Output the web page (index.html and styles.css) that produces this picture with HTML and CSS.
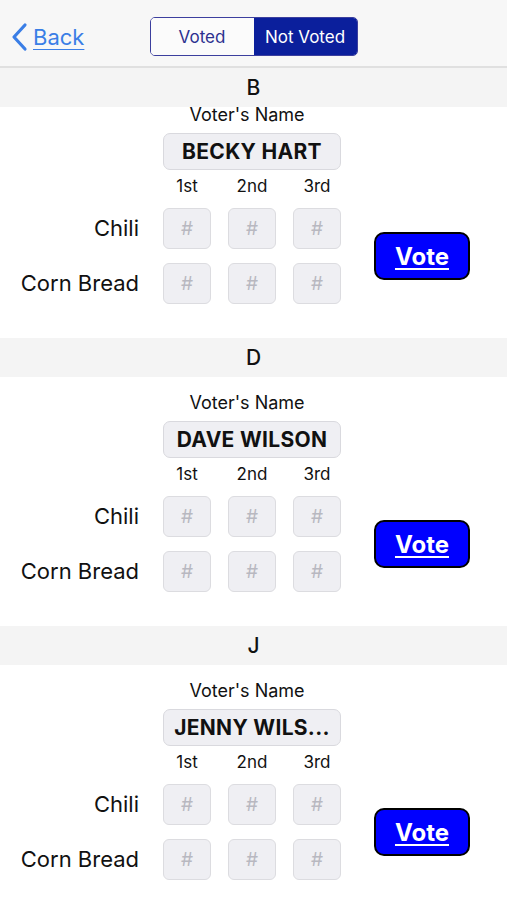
FILE: index.html
```html
<!DOCTYPE html>
<html>

<head>
	<title>Voting</title>
	<link rel="stylesheet" href="styles.css">
</head>

<body>
	<header class="navbar">
		<a class="back" href="#">
			<svg class="chevron" width="17" height="30" viewBox="0 0 17 30">
				<polyline points="14,3 3,15 14,27" fill="none" stroke="#3a7ee6" stroke-width="3.2" stroke-linecap="round" stroke-linejoin="round" />
			</svg>
			<span>Back</span>
		</a>
		<div class="segmented">
			<span class="seg">Voted</span>
			<span class="seg active">Not Voted</span>
		</div>
		<div></div>
	</header>

	<section class="group">
		<h2 class="letter">B</h2>
		<div class="entry first">
			<div class="voter-label">Voter's Name</div>
			<div class="namebox">BECKY HART</div>
			<div class="ordinals"><span>1st</span><span>2nd</span><span>3rd</span></div>
			<div class="dish">Chili</div>
			<div class="ranks"><span class="rank">#</span><span class="rank">#</span><span class="rank">#</span></div>
			<button class="vote">Vote</button>
			<div class="dish dish-second">Corn Bread</div>
			<div class="ranks ranks-second"><span class="rank">#</span><span class="rank">#</span><span class="rank">#</span></div>
		</div>
	</section>

	<section class="group">
		<h2 class="letter">D</h2>
		<div class="entry">
			<div class="voter-label">Voter's Name</div>
			<div class="namebox">DAVE WILSON</div>
			<div class="ordinals"><span>1st</span><span>2nd</span><span>3rd</span></div>
			<div class="dish">Chili</div>
			<div class="ranks"><span class="rank">#</span><span class="rank">#</span><span class="rank">#</span></div>
			<button class="vote">Vote</button>
			<div class="dish dish-second">Corn Bread</div>
			<div class="ranks ranks-second"><span class="rank">#</span><span class="rank">#</span><span class="rank">#</span></div>
		</div>
	</section>

	<section class="group">
		<h2 class="letter">J</h2>
		<div class="entry">
			<div class="voter-label">Voter's Name</div>
			<div class="namebox">JENNY WILS...</div>
			<div class="ordinals"><span>1st</span><span>2nd</span><span>3rd</span></div>
			<div class="dish">Chili</div>
			<div class="ranks"><span class="rank">#</span><span class="rank">#</span><span class="rank">#</span></div>
			<button class="vote">Vote</button>
			<div class="dish dish-second">Corn Bread</div>
			<div class="ranks ranks-second"><span class="rank">#</span><span class="rank">#</span><span class="rank">#</span></div>
		</div>
	</section>
</body>

</html>
```

FILE: styles.css
```css
* {
	margin: 0px;
	padding: 0px;
	box-sizing: border-box;
}

body {
	background: #ffffff;
	font-family: Inter, "Noto Sans", sans-serif;
	color: #111111;
	overflow: hidden;
}

.navbar {
	height: 68px;
	background: #f7f7f7;
	border-bottom: 2px solid #e0e0e0;
	display: grid;
	grid-template-columns: 1fr auto 1fr;
	align-items: start;
	padding-top: 17px;
}

.back {
	display: flex;
	align-items: center;
	height: 39px;
	padding-left: 11px;
	color: #3a7ee6;
	font-size: 22px;
	text-decoration: none;
}

.back span {
	margin-left: 5px;
	text-decoration: underline;
	text-decoration-thickness: 1px;
	text-underline-offset: 4px;
}

.chevron {
	display: block;
}

.segmented {
	display: flex;
	height: 39px;
	border: 1px solid #3c3f9e;
	border-radius: 5px;
	overflow: hidden;
}

.seg {
	width: 103px;
	display: flex;
	align-items: center;
	justify-content: center;
	font-size: 17px;
	color: #2c3190;
	background: #fbfbfb;
}

.seg.active {
	background: #0b1f9c;
	color: #ffffff;
}

.letter {
	height: 39px;
	line-height: 39px;
	background: #f4f4f4;
	text-align: center;
	font-size: 21px;
	font-weight: 500;
}

.entry {
	display: grid;
	grid-template-columns: 140px 178px 106px;
	column-gap: 23px;
	padding-top: 16px;
	padding-bottom: 34px;
}

.entry.first {
	padding-top: 0px;
}

.entry.first .voter-label {
	margin-top: -2px;
}

.voter-label {
	grid-column: 2;
	line-height: 20px;
	font-size: 18px;
	text-align: center;
	padding-right: 10px;
}

.namebox {
	grid-column: 2;
	margin-top: 8px;
	height: 37px;
	background: #efeff3;
	border: 1px solid #d9d9de;
	border-radius: 7px;
	display: flex;
	align-items: center;
	justify-content: center;
	font-size: 21px;
	font-weight: 700;
	letter-spacing: 0.3px;
}

.ordinals {
	grid-column: 2;
	margin-top: 6px;
	display: flex;
	gap: 17px;
	line-height: 20px;
	font-size: 17px;
}

.ordinals span {
	width: 48px;
	text-align: center;
}

.dish {
	grid-column: 1;
	grid-row: 4;
	margin-top: 12px;
	height: 41px;
	line-height: 41px;
	text-align: right;
	padding-right: 1px;
	font-size: 22px;
}

.ranks {
	grid-column: 2;
	grid-row: 4;
	margin-top: 12px;
	display: flex;
	gap: 17px;
}

.dish-second,
.ranks-second {
	grid-row: 5;
	margin-top: 14px;
}

.rank {
	width: 48px;
	height: 41px;
	background: #efeff3;
	border: 1px solid #dcdce0;
	border-radius: 6px;
	display: flex;
	align-items: center;
	justify-content: center;
	color: #b8b8c0;
	font-size: 19px;
}

.vote {
	grid-column: 3;
	grid-row: 4 / 6;
	align-self: center;
	margin-top: 12px;
	margin-left: 10px;
	width: 96px;
	height: 48px;
	background: #0000ff;
	border: 2px solid #000000;
	border-radius: 10px;
	color: #ffffff;
	font-family: Inter, "Noto Sans", sans-serif;
	font-size: 24px;
	font-weight: 700;
	text-decoration: underline;
	text-decoration-thickness: 2px;
	text-underline-offset: 3px;
	cursor: pointer;
}
```
